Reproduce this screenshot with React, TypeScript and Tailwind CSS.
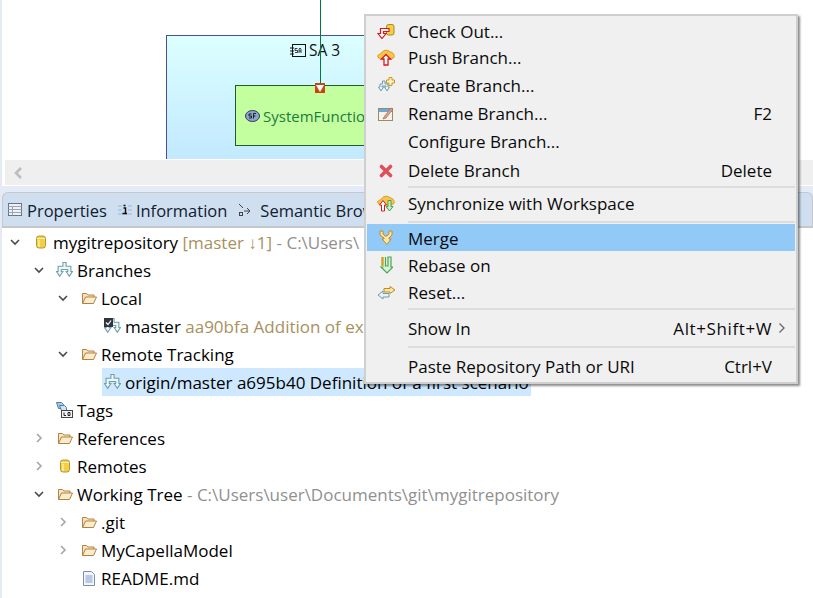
import React from "react";

const FONT = "font-['Open_Sans','Noto_Sans',sans-serif]";

function FolderIcon() {
  return (
    <svg width="16" height="14" viewBox="0 0 16 14" className="shrink-0">
      <path d="M1.500 12.500V2.500h4l1.500 1.500h6v2" fill="#f8e4c0" stroke="#b5813f" />
      <path d="M1.500 12.500l3-6.500h11l-3 6.500z" fill="#fbeccf" stroke="#b5813f" />
    </svg>
  );
}

function RepoIcon() {
  return (
    <svg width="10" height="14" viewBox="0 0 10 14" className="shrink-0">
      <rect x="0.500" y="1" width="9" height="12" rx="2.500" fill="#f2cf4a" stroke="#b8962c" />
      <path d="M1 3.500h8" stroke="#fff3b0" />
      <rect x="2" y="5" width="2" height="7" fill="#fbe88a" />
    </svg>
  );
}

function BranchIcon({ size = 17 }: { size?: number }) {
  return (
    <svg width={size} height={size} viewBox="0 0 16 16" fill="#eef6f8" stroke="#6f9ea8" className="shrink-0">
      <path d="M6.500 .5H9.500V4H14V9H15.500L12.500 13.500L9.500 9H11V7H5V9H6.500L3.500 13.500L.5 9H2V4H6.500Z" />
    </svg>
  );
}

function Chevron({ open }: { open: boolean }) {
  return (
    <svg width="10" height="10" viewBox="0 0 10 10" fill="none" className="shrink-0">
      {open ? (
        <path d="M1 3l4 4 4-4" stroke="#4a4a4a" strokeWidth="1.600" />
      ) : (
        <path d="M3 1l4 4-4 4" stroke="#a6a6a6" strokeWidth="1.600" />
      )}
    </svg>
  );
}

function TagsIcon() {
  return (
    <svg width="17" height="17" viewBox="0 0 17 17" className="shrink-0">
      <path d="M0.500 0.500h5l2 2v4h-5z" fill="#a8cbe6" stroke="#4f7ea6" />
      <path d="M3.500 3.500h5l2 2v3h-5z" fill="#cfe3f2" stroke="#4f7ea6" />
      <rect x="5.500" y="8.500" width="11" height="7" fill="#f4f4f4" stroke="#444" />
      <path d="M8 10.500v3h2M12 10.500h2v3h-2z" stroke="#222" fill="none" />
    </svg>
  );
}

function FileIcon() {
  return (
    <svg width="12" height="15" viewBox="0 0 12 15" className="shrink-0">
      <path d="M0.500 0.500h8l3 3v11h-11z" fill="#f3f6fb" stroke="#7d8fb0" />
      <path d="M2.500 5h7M2.500 7h7M2.500 9h7M2.500 11h7" stroke="#7f9bd0" />
    </svg>
  );
}

type Row = {
  indent: number;
  chevron?: "open" | "closed";
  icon: React.ReactNode;
  label: string;
  extra?: React.ReactNode;
  selected?: boolean;
};

const rows: Row[] = [
  {
    indent: 0,
    chevron: "open",
    icon: <RepoIcon />,
    label: "mygitrepository",
    extra: (
      <>
        <span className="text-[#a8915e]"> [master ↓1]</span>
        <span className="text-[#909090]"> - C:\Users\</span>
      </>
    ),
  },
  { indent: 1, chevron: "open", icon: <BranchIcon />, label: "Branches" },
  { indent: 2, chevron: "open", icon: <FolderIcon />, label: "Local" },
  {
    indent: 3,
    icon: (
      <span className="relative block w-[17px] h-[17px] shrink-0">
        <BranchIcon />
        <svg width="9" height="9" viewBox="0 0 9 9" className="absolute left-0 top-0">
          <rect width="9" height="9" fill="#2f3640" />
          <path d="M2 4.500l2 2 3-4" fill="none" stroke="#fff" strokeWidth="1.200" />
        </svg>
      </span>
    ),
    label: "master",
    extra: <span className="text-[#a8915e]"> aa90bfa Addition of ex</span>,
  },
  { indent: 2, chevron: "open", icon: <FolderIcon />, label: "Remote Tracking" },
  { indent: 3, icon: <BranchIcon />, label: "origin/master a695b40 Definition of a first scenario", selected: true },
  { indent: 1, icon: <TagsIcon />, label: "Tags" },
  { indent: 1, chevron: "closed", icon: <FolderIcon />, label: "References" },
  { indent: 1, chevron: "closed", icon: <RepoIcon />, label: "Remotes" },
  {
    indent: 1,
    chevron: "open",
    icon: <FolderIcon />,
    label: "Working Tree",
    extra: <span className="text-[#909090]"> - C:\Users\user\Documents\git\mygitrepository</span>,
  },
  { indent: 2, chevron: "closed", icon: <FolderIcon />, label: ".git" },
  { indent: 2, chevron: "closed", icon: <FolderIcon />, label: "MyCapellaModel" },
  { indent: 2, icon: <FileIcon />, label: "README.md" },
];

const indentClass = ["pl-[8px]", "pl-[32px]", "pl-[56px]", "pl-[80px]"];

function TreeRow({ row }: { row: Row }) {
  return (
    <div className={`flex items-center h-[28px] whitespace-pre ${indentClass[row.indent]}`}>
      <span className="w-[10px] flex justify-center shrink-0">
        {row.chevron && <Chevron open={row.chevron === "open"} />}
      </span>
      <span className={`flex items-center h-[28px] ml-[10px] pr-[2px] ${row.selected ? "bg-[#cde8ff]" : ""}`}>
        <span className="w-[21px] flex justify-center shrink-0">{row.icon}</span>
        <span className="ml-[2px]">
          {row.label}
          {row.extra}
        </span>
      </span>
    </div>
  );
}

function MI({ children }: { children: React.ReactNode }) {
  return <span className="w-[22px] h-[18px] flex items-center justify-center">{children}</span>;
}

function CheckOutIcon() {
  return (
    <svg width="18" height="15" viewBox="0 0 18 15">
      <rect x="9.500" y="0.500" width="7.500" height="10.500" rx="2" fill="#f2cf4a" stroke="#a88a20" />
      <path d="M12 4.500H3.500V9.500H1l4 5 4-5H6.500V7.500H12z" fill="#fff" stroke="#e0141c" strokeWidth="1.200" />
    </svg>
  );
}

function PushIcon() {
  return (
    <svg width="18" height="17" viewBox="0 0 18 17">
      <path d="M1 8.500C0 6 2 5 4 5 5 1 11 0 13 3c3 0 5 3 4 5.500L14 10H4z" fill="#f7c64a" stroke="#d99a1e" />
      <path d="M9 5.500l4.500 4.500H11v6H7v-6H4.500z" fill="#fff" stroke="#e0141c" strokeWidth="1.300" />
    </svg>
  );
}

function CreateIcon() {
  return (
    <svg width="18" height="17" viewBox="0 0 18 17">
      <path d="M5.500 4H8v3h3v3h1.500L10 14 7.500 10H9V9H5v1h1.500L4 14 1.500 10H3V7h2.500z" fill="#eaf3f5" stroke="#6f9ea8" />
      <path d="M12 .5h3v2.500h2.500V6H15v2.500h-3V6H9.500V3H12z" fill="#fff2c8" stroke="#c9951e" />
    </svg>
  );
}

function RenameIcon() {
  return (
    <svg width="16" height="15" viewBox="0 0 16 15">
      <rect x="0.500" y="2.500" width="14" height="12" fill="#f6f4ea" stroke="#9a8c62" />
      <rect x="1" y="3" width="13" height="3" fill="#6aa8df" />
      <path d="M6 11l7-9 2 1-7 9-3 1z" fill="#e8a08c" stroke="#a06a50" strokeWidth="0.700" />
    </svg>
  );
}

function DeleteIcon() {
  return (
    <svg width="14" height="14" viewBox="0 0 14 14">
      <path d="M2.500 2.500l9 9M11.500 2.500l-9 9" stroke="#e0505a" strokeWidth="3.600" strokeLinecap="round" />
    </svg>
  );
}

function SyncIcon() {
  return (
    <svg width="18" height="17" viewBox="0 0 18 17">
      <path d="M1 8.500C0 6 2 5 4 5 5 1 11 0 13 3c3 0 5 3 4 5.500L14 10H4z" fill="#f7c64a" stroke="#d99a1e" />
      <path d="M6 5.500l3.500 4.500H7.500v6h-3v-6H2.500z" fill="#fff" stroke="#e0141c" />
      <path d="M12.500 16L9 11.500h2v-6h3v6h2z" fill="#c8eec8" stroke="#3fa34a" />
    </svg>
  );
}

function MergeIcon() {
  return (
    <svg width="14" height="16" viewBox="0 0 14 16" fill="#fbe6a8" stroke="#c48a1e">
      <path d="M1 1h3v3l2 2h2l2-2V1h3v4l-3 3v1h2l-4 5.500L3 9h2V8L1 5z" />
    </svg>
  );
}

function RebaseIcon() {
  return (
    <svg width="14" height="18" viewBox="0 0 14 18" fill="none">
      <path d="M3.500 1v9" stroke="#d0a020" strokeWidth="2.400" />
      <path d="M6.500 1v9h2.500V1h3v10h2l-6 6-6-6h2.500" stroke="#4aa552" fill="#d8f2d8" strokeWidth="1.200" />
    </svg>
  );
}

function ResetIcon() {
  return (
    <svg width="19" height="14" viewBox="0 0 19 14">
      <path d="M13 .5l5 3.500-5 3.500V6H7V2.500h6z" fill="#fbe6a8" stroke="#c48a1e" />
      <path d="M6 5L1 9l5 4v-2h6V7.500H6z" fill="#e8f2f4" stroke="#6f9ea8" />
    </svg>
  );
}

function MenuItem({
  h,
  icon,
  label,
  shortcut,
  arrow,
  active,
}: {
  h: string;
  icon?: React.ReactNode;
  label: string;
  shortcut?: string;
  arrow?: boolean;
  active?: boolean;
}) {
  return (
    <div className={`flex items-center ${h} ${active ? "bg-[#91c9f7] pt-px" : ""}`}>
      <span className="w-[41px] pl-[8px] shrink-0">{icon && <MI>{icon}</MI>}</span>
      <span className="flex-1 whitespace-pre">{label}</span>
      {shortcut && <span className={`whitespace-pre ${arrow ? "tracking-[0.6px]" : ""}`}>{shortcut}</span>}
      <span className="w-[23px] shrink-0 flex justify-start pl-[6px]">
        {arrow && (
          <svg width="8" height="12" viewBox="0 0 8 12" fill="none">
            <path d="M1.500 1.500L6 6l-4.500 4.500" stroke="#666" strokeWidth="1.300" />
          </svg>
        )}
      </span>
    </div>
  );
}

function Sep({ h }: { h: string }) {
  return (
    <div className={`flex items-center ${h}`}>
      <div className="ml-[41px] flex-1 h-[2px] bg-[#dcdcdc]" />
    </div>
  );
}

export default function App() {
  return (
    <div className={`relative w-[813px] h-[598px] overflow-hidden bg-[#e4eaf6] text-[17px] leading-none text-black ${FONT}`}>
      {/* diagram editor */}
      <div className="ml-[2px] h-[186px] bg-white flex flex-col">
        <div className="relative h-[159px] overflow-hidden">
          <div className="absolute left-[164px] top-[35px] w-[300px] h-[140px] border border-[#4a4f9a] bg-gradient-to-b from-[#dcffff] to-[#bfe6ff]">
            <div className="absolute left-[123px] top-[7px] flex items-center gap-[3px] text-[15.5px] text-[#111]">
              <svg width="16" height="14" viewBox="0 0 16 14" fill="none" stroke="#111">
                <rect x="2.500" y="0.500" width="13" height="12" />
                <path d="M0 4h4M0 7h4M0 10h4" />
                <path d="M5 8.500h2.500v-2H5v-2h2.500M9 9V5l1-1 1 1v4M9 7h2" strokeWidth="0.800" />
              </svg>
              <span>SA 3</span>
            </div>
            <div className="absolute left-[68px] top-[49px] w-[220px] h-[61px] border border-[#1b5e2b] bg-[#c4ff9f] flex items-center pl-[9px] text-[15px] text-[#1c7a3c]">
              <svg width="15" height="12" viewBox="0 0 15 12" className="mr-[3px] shrink-0">
                <ellipse cx="7.500" cy="6" rx="7" ry="5.500" fill="#8aa6d0" stroke="#333b55" />
                <path d="M4 8h2.500V6H4V4h2.500M8.500 8.500V3.500H11M8.500 6H10.500" fill="none" stroke="#111" strokeWidth="0.900" />
              </svg>
              <span className="pt-[2px]">SystemFunction</span>
            </div>
          </div>
          <div className="absolute left-[318px] top-0 w-px h-[84px] bg-[#007a3d]" />
          <div className="absolute left-[313px] top-[83px] w-[10px] h-[10px] bg-[#cc4411] flex items-center justify-center">
            <svg width="8" height="7" viewBox="0 0 8 7">
              <path d="M0 0h8L4 7z" fill="#fff" />
            </svg>
          </div>
        </div>
        <div className="ml-[3px] mt-px h-[25px] bg-[#efefef] flex items-center pl-[7px]">
          <svg width="12" height="14" viewBox="0 0 12 14" fill="none">
            <path d="M9 2L4 7l5 5" stroke="#bdbdbd" strokeWidth="2.600" />
          </svg>
        </div>
      </div>

      {/* bottom tab folder */}
      <div className="mt-[6px] ml-[2px] h-[34px] bg-[#cfdfef] border-t border-x border-[#c4c8cc] rounded-t-[6px] flex items-center pl-[5px] pt-[3px] text-[16.5px] text-[#10202f]">
        <svg width="14" height="13" viewBox="0 0 14 13" className="shrink-0 -mt-[3px]">
          <rect x="0.500" y="0.500" width="13" height="12" fill="#eef2f6" stroke="#6a7486" />
          <path d="M0.500 3.500h13M0.500 6.500h13M0.500 9.500h13M4.500 3.500v9" stroke="#9aa4b2" />
        </svg>
        <span className="ml-[5px]">Properties</span>
        <svg width="14" height="14" viewBox="0 0 14 14" className="ml-[11px] shrink-0 -mt-[3px]">
          <path d="M0 3h4M10 3h4M0 7h4M10 7h4M0 11h14" stroke="#a9c4ea" strokeWidth="1.500" />
          <path d="M5.500 2.500h2M5.500 5h2v5M4.500 10.500h4.500" stroke="#111" strokeWidth="1.500" fill="none" />
        </svg>
        <span className="ml-[4px]">Information</span>
        <svg width="15" height="14" viewBox="0 0 15 14" fill="none" stroke="#444" className="ml-[11px] shrink-0 -mt-[3px]">
          <path d="M1 1l4 4M6 8h6M9 5l3 3-3 3" />
          <rect x="1.500" y="9.500" width="3" height="3" />
        </svg>
        <span className="ml-[7px] whitespace-pre">Semantic Browser</span>
      </div>

      {/* git repositories tree */}
      <div className="ml-[2px] h-[372px] bg-white border-t-2 border-[#c4c8cc]">
        {rows.map((row) => (
          <TreeRow key={row.label} row={row} />
        ))}
      </div>

      {/* context menu */}
      <div className="absolute left-[364px] top-[14px] w-[434px] h-[370px] bg-[#f0f0f0] border-2 border-[#cfcfcf] shadow-[2px_2px_2px_rgba(0,0,0,0.45)] pl-px pr-px text-[#0a0a0a]">
        <div className="h-[2px]" />
        <MenuItem h="h-[26px]" icon={<CheckOutIcon />} label="Check Out..." />
        <MenuItem h="h-[27px]" icon={<PushIcon />} label="Push Branch..." />
        <MenuItem h="h-[28px]" icon={<CreateIcon />} label="Create Branch..." />
        <MenuItem h="h-[28px]" icon={<RenameIcon />} label="Rename Branch..." shortcut="F2" />
        <MenuItem h="h-[29px]" label="Configure Branch..." />
        <MenuItem h="h-[29px]" icon={<DeleteIcon />} label="Delete Branch" shortcut="Delete" />
        <Sep h="h-[3px]" />
        <MenuItem h="h-[31px]" icon={<SyncIcon />} label="Synchronize with Workspace" />
        <Sep h="h-[5px]" />
        <MenuItem h="h-[27px]" icon={<MergeIcon />} label="Merge" active />
        <MenuItem h="h-[28px]" icon={<RebaseIcon />} label="Rebase on" />
        <MenuItem h="h-[27px]" icon={<ResetIcon />} label="Reset..." />
        <Sep h="h-[5px]" />
        <MenuItem h="h-[34px]" label="Show In" shortcut="Alt+Shift+W" arrow />
        <Sep h="h-[3px]" />
        <MenuItem h="h-[34px] pt-[2px]" label="Paste Repository Path or URI" shortcut="Ctrl+V" />
      </div>
    </div>
  );
}
